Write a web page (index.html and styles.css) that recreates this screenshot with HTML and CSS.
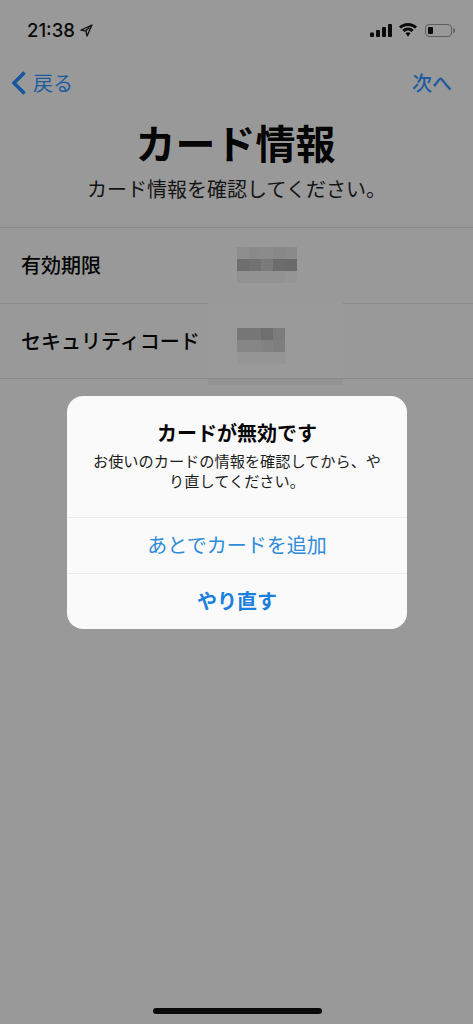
FILE: index.html
```html
<!DOCTYPE html>
<html lang="ja">
<head>
<meta charset="utf-8">
<title>カード情報</title>
<link rel="stylesheet" href="styles.css">
</head>
<body>
<div class="screen">
  <header class="status">
    <div class="status-left">
      <span class="time">21:38</span>
      <svg class="loc" viewBox="0 0 13 13"><path d="M12 1 1 6.200l5 .9 1 5z M9.500 3.500 5.200 7.300" fill="none" stroke="#111" stroke-width="1.300" stroke-linejoin="round"/></svg>
    </div>
    <div class="status-right">
      <svg class="signal" viewBox="0 0 22 13"><rect x="0" y="8.500" width="4" height="4.500" rx="1"/><rect x="6" y="6" width="4" height="7" rx="1"/><rect x="12" y="3" width="4" height="10" rx="1"/><rect x="18" y="0" width="4" height="13" rx="1"/></svg>
      <svg class="wifi" viewBox="0 0 18 14"><path d="M9 0C5.600 0 2.500 1.300 0 3.600L2 5.700C3.900 3.900 6.300 2.900 9 2.900s5.100 1 7 2.800l2-2.100C15.500 1.300 12.400 0 9 0z"/><path d="M9 4.600C6.900 4.600 5 5.400 3.400 7L5.500 9.100C6.500 8.100 7.700 7.500 9 7.500s2.500.6 3.500 1.600L14.600 7C13 5.400 11.100 4.600 9 4.600z"/><path d="M9 9.200c-1 0-1.800.4-2.400 1L9 13.800l2.400-3.600C10.800 9.600 10 9.200 9 9.200z"/></svg>
      <div class="battery"><span class="level"></span></div>
      <span class="nub"></span>
    </div>
  </header>

  <nav class="nav">
    <div class="back">
      <svg class="chevron" viewBox="0 0 16 26"><path d="M13.500 2.500 3 13l10.500 10.500" fill="none" stroke="#1658a0" stroke-width="3.600"/></svg>
      <span>戻る</span>
    </div>
    <span class="next">次へ</span>
  </nav>

  <h1 class="title">カード情報</h1>
  <p class="subtitle">カード情報を確認してください。</p>

  <div class="rows">
    <div class="row">
      <span class="label">有効期限</span>
      <div class="value">
        <div class="mosaic five">
          <i class="g8e"></i><i class="g8a"></i><i class="g8b"></i><i class="g88"></i><i class="g8a"></i>
          <i class="g6e"></i><i class="g72"></i><i class="g7a"></i><i class="g6c"></i><i class="g6a"></i>
          <i class="g92"></i><i class="g92"></i><i class="g92"></i><i class="g92"></i><i class="g95"></i>
        </div>
      </div>
    </div>
    <div class="row">
      <span class="label">セキュリティコード</span>
      <div class="value cover">
        <div class="mosaic four">
          <i class="g77"></i><i class="g77"></i><i class="g6f"></i><i class="g7c"></i>
          <i class="g86"></i><i class="g85"></i><i class="g82"></i><i class="g7f"></i>
          <i class="g95"></i><i class="g95"></i><i class="g95"></i><i class="g95"></i>
        </div>
      </div>
    </div>
    <div class="smear"></div>
  </div>

  <div class="alert">
    <div class="alert-text">
      <h2 class="alert-title">カードが無効です</h2>
      <p class="alert-body">お使いのカードの情報を確認してから、やり直してください。</p>
    </div>
    <div class="alert-btn">あとでカードを追加</div>
    <div class="alert-btn strong">やり直す</div>
  </div>

  <div class="home"></div>
</div>
</body>
</html>
```
FILE: styles.css
```css
* { box-sizing: border-box; }
html, body { margin: 0; padding: 0; }
body {
  width: 473px;
  height: 1024px;
  overflow: hidden;
  background: #999;
  font-family: "Noto Sans CJK JP", "Noto Sans", sans-serif;
  color: #050505;
}
.screen { position: relative; width: 473px; height: 1024px; display: flex; flex-direction: column; }

.status {
  height: 60px;
  padding: 18px 18px 0 27px;
  display: flex;
  justify-content: space-between;
  align-items: flex-start;
}
.status-left { display: flex; align-items: center; gap: 5px; height: 24px; }
.time { font-family: Inter, "Liberation Sans", sans-serif; font-size: 18.500px; font-weight: 500; line-height: 24px; color: #0a0a0a; }
.loc { width: 13px; height: 13px; }
.status-right { display: flex; align-items: center; height: 24px; }
.signal { width: 22px; height: 13px; fill: #0a0a0a; margin-right: 7px; }
.wifi { width: 18px; height: 14px; fill: #0a0a0a; margin-right: 8px; }
.battery { width: 27px; height: 13px; border: 1px solid #5f5f5f; border-radius: 4px; padding: 2px; }
.level { display: block; width: 5px; height: 7px; background: #0a0a0a; border-radius: 1px; }
.nub { width: 2px; height: 5px; background: #666; margin-left: 1px; border-radius: 0 2px 2px 0; }

.nav {
  height: 46px;
  padding: 0 21px 1px 11px;
  display: flex;
  justify-content: space-between;
  align-items: center;
  font-size: 20px;
  color: #1f5c9e;
}
.back { display: flex; align-items: center; gap: 6px; }
.chevron { width: 16px; height: 26px; }
.next { font-weight: 500; }

.title {
  margin: 12px 0 0;
  padding-right: 2px;
  height: 48px;
  text-align: center;
  font-size: 40px;
  line-height: 48px;
  font-weight: 700;
}
.subtitle {
  margin: 8px 0 0;
  height: 30px;
  text-align: center;
  font-size: 20px;
  line-height: 30px;
  color: #141414;
}

.rows { position: relative; margin-top: 23px; border-top: 1px solid #8a8a8a; }
.row {
  height: 75.500px;
  padding-left: 21px;
  display: grid;
  grid-template-columns: 187px 135px;
  align-items: center;
  border-bottom: 1px solid #8a8a8a;
}
.label { font-size: 20px; font-weight: 500; line-height: 30px; color: #050505; white-space: nowrap; }
.value { height: 100%; display: flex; align-items: center; padding-left: 29px; }
.value.cover { height: calc(100% + 1px); margin-top: -1px; background: #9a9a9a; padding-top: 12px; }
.mosaic { display: grid; grid-auto-rows: 12px; }
.mosaic i { display: block; }
.mosaic.five { grid-template-columns: repeat(5, 12px); }
.mosaic.four { grid-template-columns: repeat(4, 12px); }
.g6a { background: #6a6a6a; } .g6c { background: #6c6c6c; } .g6e { background: #6e6e6e; }
.g6f { background: #6f6f6f; } .g72 { background: #727272; } .g77 { background: #777; }
.g7a { background: #7a7a7a; } .g7c { background: #7c7c7c; } .g7f { background: #7f7f7f; }
.g82 { background: #828282; } .g85 { background: #858585; } .g86 { background: #868686; }
.g88 { background: #888; } .g8a { background: #8a8a8a; } .g8b { background: #8b8b8b; }
.g8e { background: #8e8e8e; } .g92 { background: #929292; } .g95 { background: #959595; }
.smear { position: absolute; left: 208px; top: 151px; width: 135px; height: 6px; background: #939393; }

.alert {
  position: absolute;
  left: 67px;
  top: 396px;
  width: 340px;
  height: 233px;
  background: #fafafa;
  border-radius: 16px;
  overflow: hidden;
  display: flex;
  flex-direction: column;
}
.alert-text { height: 121px; padding: 22px 20px 0; text-align: center; }
.alert-title { margin: 0; font-size: 20px; line-height: 30px; font-weight: 700; color: #050505; }
.alert-body { margin: 3px 0 0; font-size: 15.200px; line-height: 19.500px; color: #1c1c1c; }
.alert-btn {
  height: 56px;
  padding-bottom: 3px;
  border-top: 1px solid #ebebeb;
  display: flex;
  align-items: center;
  justify-content: center;
  font-size: 20px;
  color: #2f8bd8;
}
.alert-btn.strong { font-weight: 700; color: #1a7fdc; padding-bottom: 2px; }

.home {
  position: absolute;
  left: 153px;
  top: 1008px;
  width: 169px;
  height: 6px;
  border-radius: 3px;
  background: #0a0a0a;
}
```
